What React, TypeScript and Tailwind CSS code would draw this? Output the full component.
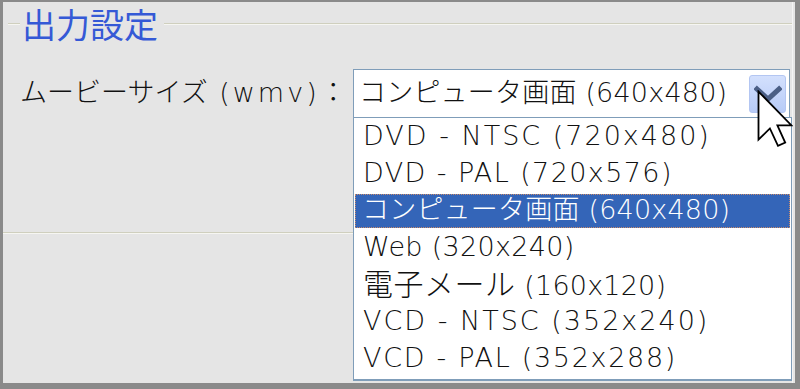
import React from "react";

type Item = { jp?: string; text: string; track: string };

// widths of the original (MS UI Gothic) differ per row, so each row gets its own tracking
const ITEMS: Item[] = [
  { text: "DVD - NTSC (720x480)", track: "tracking-[2px]" },
  { text: "DVD - PAL (720x576)", track: "tracking-[1.4px]" },
  { jp: "コンピュータ画面", text: " (640x480)", track: "tracking-[0.2px]" },
  { text: "Web (320x240)", track: "tracking-[0.3px]" },
  { jp: "電子メール", text: " (160x120)", track: "tracking-[0.2px]" },
  { text: "VCD - NTSC (352x240)", track: "tracking-[2px]" },
  { text: "VCD - PAL (352x288)", track: "tracking-[1.7px]" },
];

const SELECTED = 2;

function GroupLine({ className = "" }: { className?: string }) {
  return <div className={"h-[2px] border-t border-b border-t-[#cfcfbe] border-b-[#f6f6f2] " + className} />;
}

function Chevron() {
  return (
    <svg width="28" height="18" viewBox="0 0 28 18" fill="none">
      <path d="M3 4 L14 14 L25 4" stroke="#4b5f86" strokeWidth="5" strokeLinecap="square" />
    </svg>
  );
}

function Cursor() {
  return (
    <svg width="36" height="58" viewBox="0 0 12 19.3" className="block">
      <path
        d="M0.5 0.5 L0.5 16.5 L4.3 12.8 L7 18.6 L9.4 17.5 L6.8 11.8 L11.5 11.8 Z"
        fill="#ffffff"
        stroke="#000000"
        strokeWidth="0.6"
        strokeLinejoin="miter"
      />
    </svg>
  );
}

function ItemLabel({ item }: { item: Item }) {
  return (
    <span className={"whitespace-nowrap " + item.track}>
      {item.jp && (
        <span className={item.jp === "電子メール" ? "text-[30px] tracking-[0.5px]" : ""}>{item.jp}</span>
      )}
      {item.text}
    </span>
  );
}

export default function App() {
  return (
    <div
      className="relative w-[800px] h-[389px] overflow-hidden bg-[#e5e5e5] border-[#8a8a8a] border-t-2 border-l-[3px] border-r-[5px] border-b-[6px] text-[#111] font-light"
      style={{ fontFamily: '"DejaVu Sans", "Noto Sans CJK JP", sans-serif' }}
    >
      <div className="h-full border-r border-r-[#f4f4f4] mr-[2px]">
        {/* group box title */}
        <div className="flex items-center h-[44px]">
          <GroupLine className="ml-[5px] w-[12px]" />
          <span className="pl-[2px] pr-[6px] text-[34px] leading-[1.25] font-normal text-[#3559d6] [font-family:'Noto_Sans_CJK_JP',sans-serif]">
            出力設定
          </span>
          <GroupLine className="flex-1" />
        </div>

        {/* movie size row */}
        <div className="flex items-center mt-[23px] pl-[17px]">
          <div className="w-[333px] text-[27px] leading-[1.2] whitespace-nowrap">
            ムービーサイズ<span className="tracking-[3px]"> (wmv)</span>：
          </div>
          <div className="w-[437px] h-[49px] bg-white border border-[#7f9db9] flex items-center pl-[5px] pr-[3px]">
            <span className="flex-1 text-[27px] leading-[1.2] whitespace-nowrap tracking-[0.2px]">
              コンピュータ画面 (640x480)
            </span>
            <div className="w-[37px] h-[38px] rounded-[3px] border border-[#b3c6f2] bg-gradient-to-b from-[#d3e0fd] to-[#b7cbf7] flex items-center justify-center">
              <Chevron />
            </div>
          </div>
        </div>

        <GroupLine className="mt-[114px]" />
      </div>

      {/* open dropdown list */}
      <div className="absolute left-[350px] top-[115px] w-[439px] h-[264px] bg-white border border-[#7f9db9] border-b-2">
        {ITEMS.map((item, i) => (
          <div key={item.text} className="h-[37px] flex items-center text-[27px] leading-[1.2]">
            {i === SELECTED ? (
              <div className="w-full h-[34px] mx-[1px] bg-[#3465b8] outline-1 outline-dotted outline-[#c98b6a] -outline-offset-1 flex items-center pl-[7px] text-white">
                <ItemLabel item={item} />
              </div>
            ) : (
              <div className="pl-[9px]">
                <ItemLabel item={item} />
              </div>
            )}
          </div>
        ))}
      </div>

      {/* mouse pointer */}
      <div className="absolute left-[754px] top-[88px]">
        <Cursor />
      </div>
    </div>
  );
}
